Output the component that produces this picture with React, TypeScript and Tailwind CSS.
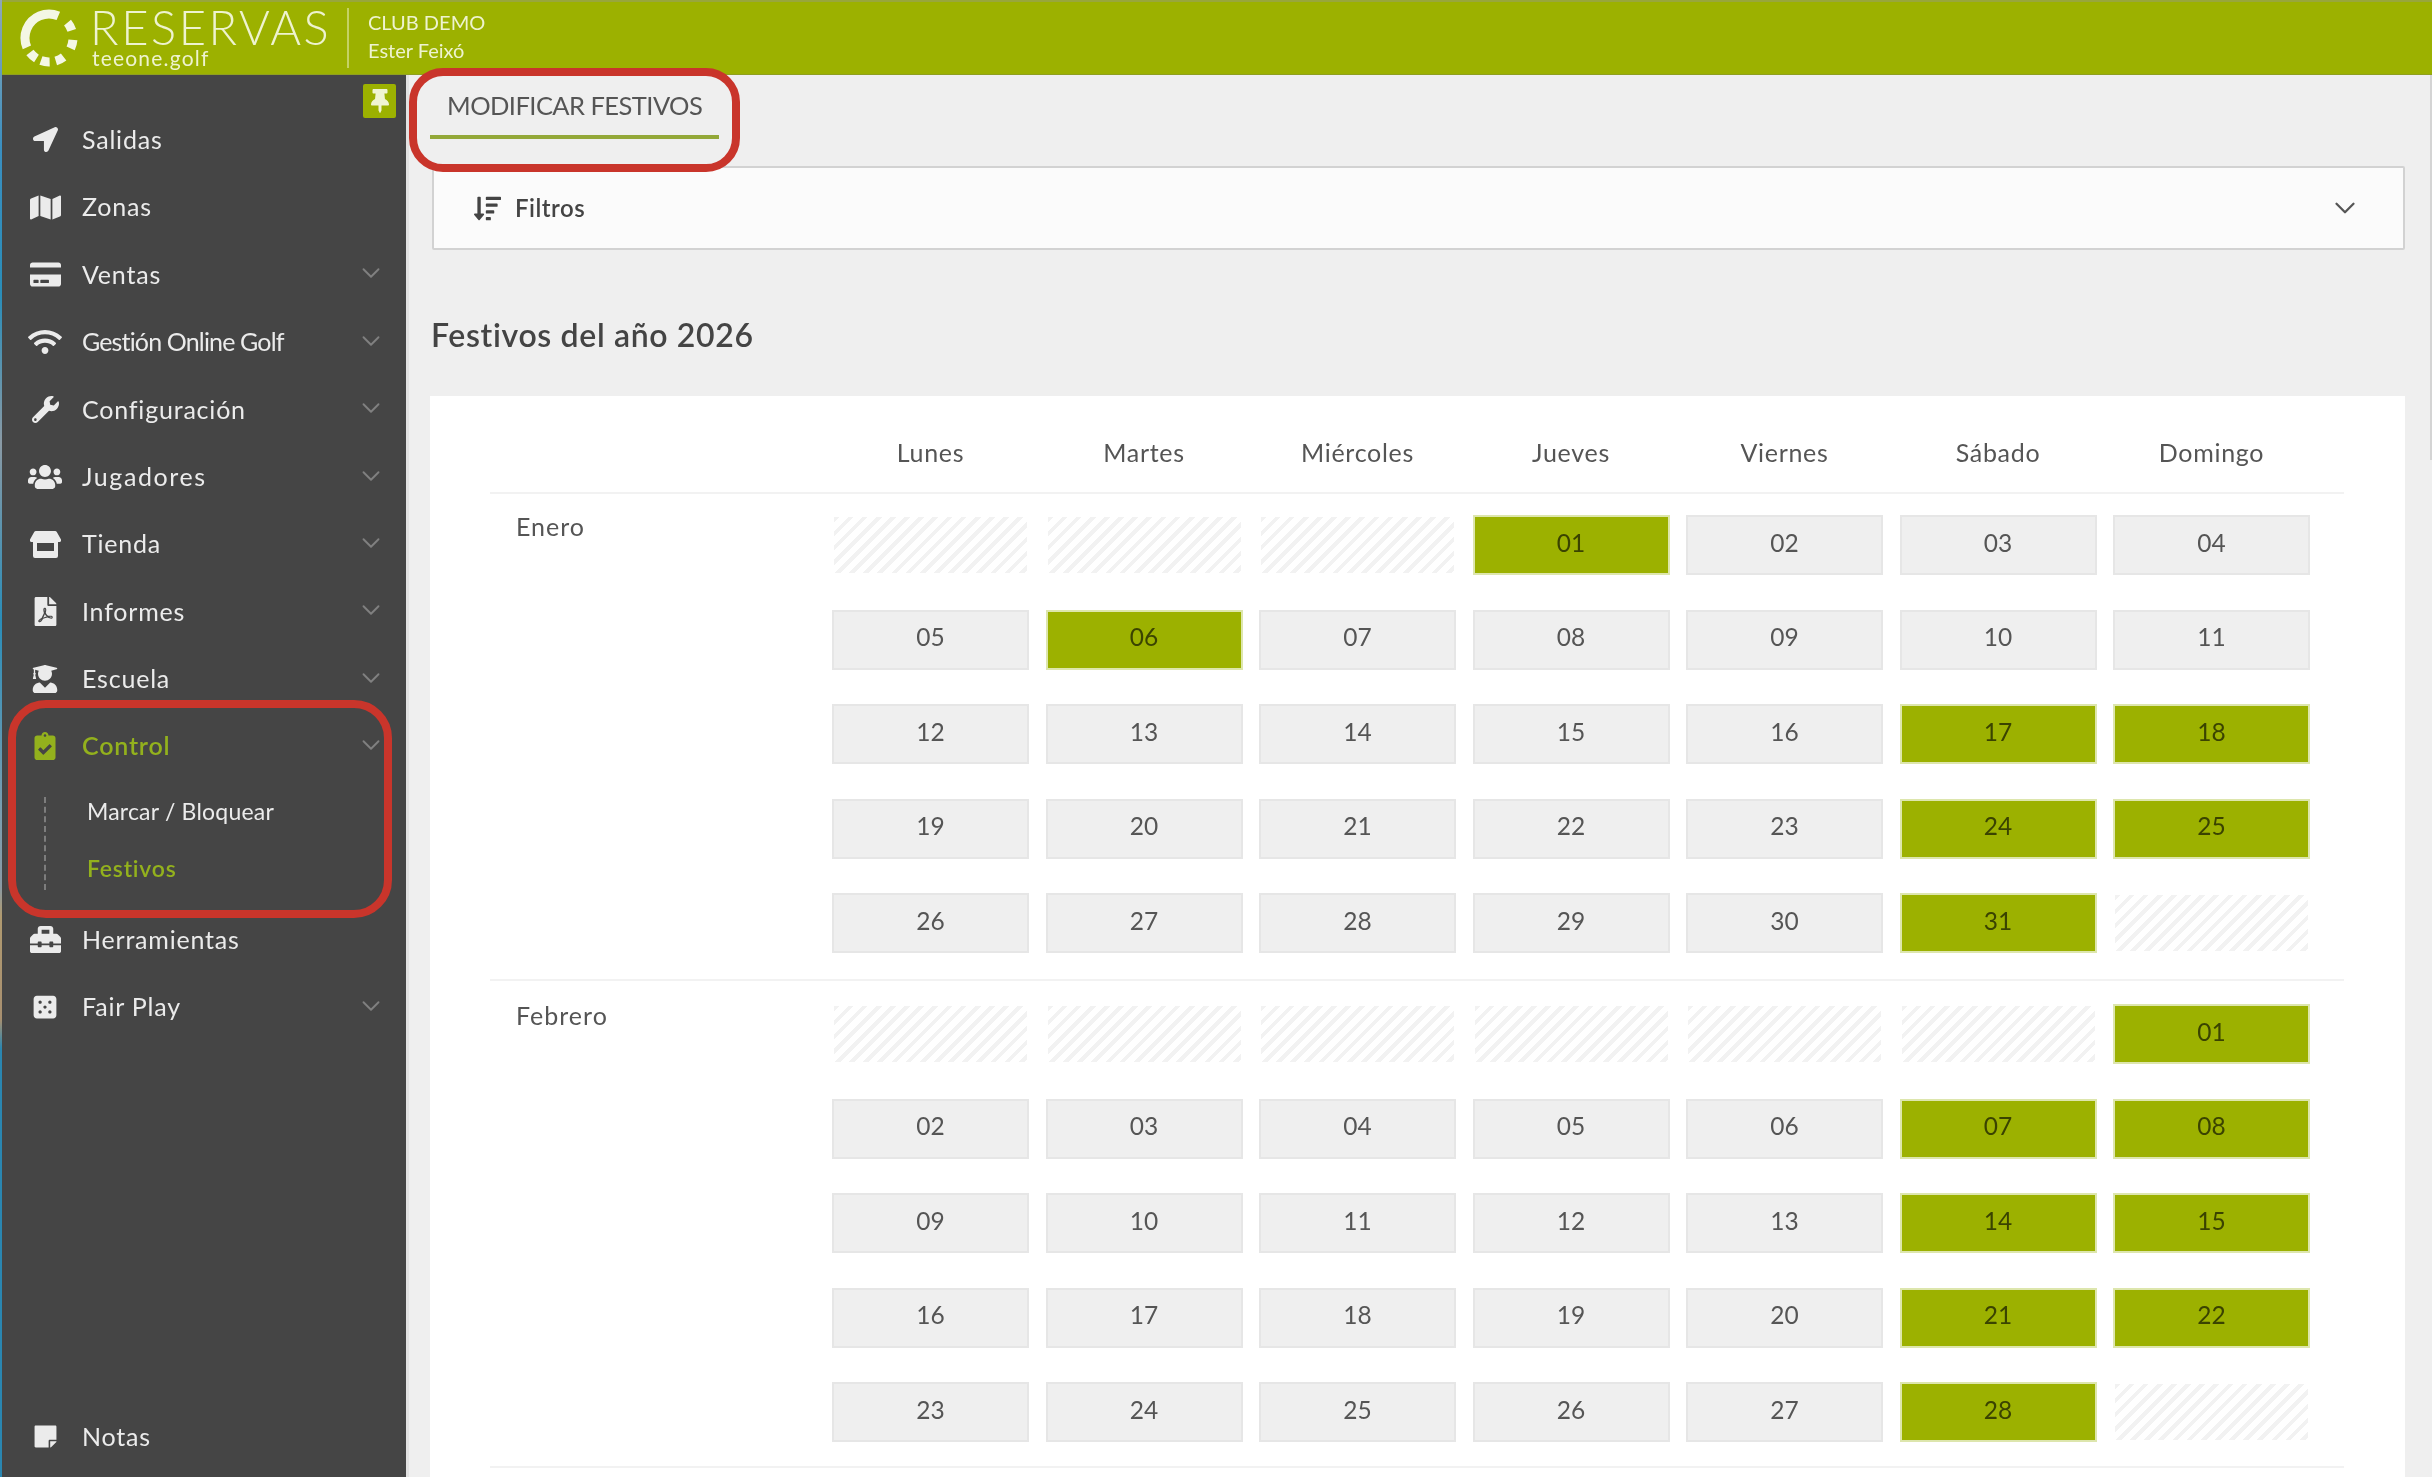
import React from "react";
import { ChevronDown } from "lucide-react";
import {
  FaLocationArrow, FaMap, FaCreditCard, FaWifi, FaWrench, FaUsers, FaFilePdf,
  FaUserGraduate, FaClipboardCheck, FaToolbox, FaDiceFive, FaStickyNote, FaThumbtack, FaSortAmountDown,
} from "react-icons/fa";

function StoreIcon() {
  return (
    <svg viewBox="0 0 31 27" className="h-[27px] w-[31px]" fill="currentColor">
      <path d="M6 0h19a2 2 0 0 1 1.8 1.1L31 8.5c.5 1.3-.4 2.5-1.7 2.5H1.7C.4 11-.5 9.8 0 8.5L4.2 1.100A2 2 0 0 1 6 0z" />
      <path fillRule="evenodd" d="M3 11h25v14a2 2 0 0 1-2 2H5a2 2 0 0 1-2-2V11zm4 1v8h17v-8H7z" />
    </svg>
  );
}

const menu = [
  { label: "Salidas", icon: FaLocationArrow, size: "text-[25px]" },
  { label: "Zonas", icon: FaMap, size: "text-[31px]" },
  { label: "Ventas", icon: FaCreditCard, more: true, size: "text-[31px]" },
  { label: "Gestión Online Golf", icon: FaWifi, more: true, size: "text-[34px]", track: "tracking-[-0.85px]" },
  { label: "Configuración", icon: FaWrench, more: true, size: "text-[27px]" },
  { label: "Jugadores", icon: FaUsers, more: true, size: "text-[34px]", track: "tracking-[1.6px]" },
  { label: "Tienda", icon: StoreIcon, more: true },
  { label: "Informes", icon: FaFilePdf, more: true, size: "text-[29px]" },
  { label: "Escuela", icon: FaUserGraduate, more: true, size: "text-[28px]" },
];

type RowProps = { label: string; icon: any; more?: boolean; active?: boolean; size?: string; track?: string };

function Row({ label, icon: Icon, more, active, size = "text-[25px]", track = "tracking-[0.8px]" }: RowProps) {
  return (
    <div className={`flex h-[67.4px] items-center pl-[25px] pr-[27px] ${active ? "text-[#93b11d] font-semibold" : "text-[#ebebeb]"}`}>
      <span className={`flex w-[36px] justify-center ${size}`}><Icon /></span>
      <span className={`ml-[19px] flex-1 text-[25px] ${track}`}>{label}</span>
      {more && <ChevronDown className="-mr-[7px] -mt-[2px] h-[30px] w-[30px] text-[#808080]" strokeWidth={1.5} />}
    </div>
  );
}

function Logo() {
  const dots = [132, 99, 63, 15, -29];
  const c = 2 * Math.PI * 24;
  return (
    <svg viewBox="0 0 64 64" className="h-[64px] w-[64px] shrink-0">
      <circle cx="32" cy="32" r="24" fill="none" stroke="#f4f7e4" strokeWidth="9"
        strokeDasharray={`${(c * 135) / 360} ${c}`} transform="rotate(157 32 32)" />
      {dots.map((a) => (
        <circle key={a} cx="32" cy="32" r="24" fill="none" stroke="#f4f7e4" strokeWidth="9"
          strokeDasharray={`${(c * 21) / 360} ${c}`} transform={`rotate(${a - 10.5} 32 32)`} />
      ))}
    </svg>
  );
}

const rows = (first: number, days: number, on: Record<number, boolean>) => {
  const cells: (number | null)[] = [];
  for (let i = 0; i < first; i++) cells.push(null);
  for (let d = 1; d <= days; d++) cells.push(d);
  while (cells.length < 35) cells.push(null);
  return { cells, on };
};

const months = [
  { name: "Enero", space: "pb-[26px] pt-[21px]", ...rows(3, 31, { 1: true, 6: true, 17: true, 18: true, 24: true, 25: true, 31: true }) },
  { name: "Febrero", space: "pb-[24px] pt-[23px]", ...rows(6, 28, { 1: true, 7: true, 8: true, 14: true, 15: true, 21: true, 22: true, 28: true }) },
];

function Cell({ day, on }: { day: number | null; on: boolean }) {
  if (day === null) {
    return <div className="h-[60px] border-2 border-white bg-[repeating-linear-gradient(135deg,#f2f2f2_0,#f2f2f2_4px,#ffffff_4px,#ffffff_10px)]" />;
  }
  const text = String(day).padStart(2, "0");
  return (
    <div className={`flex h-[60px] items-center justify-center border-2 pb-[4px] text-[24.5px] ${on ? "border-[#dde6ad] bg-[#9cb100] text-[#3a4300]" : "border-[#e6e6e6] bg-[#efefef] text-[#555555]"}`}>
      {text}
    </div>
  );
}

export default function App() {
  return (
    <div className="relative flex h-[1477px] w-[2432px] overflow-hidden bg-[#efefef] font-['Lato',sans-serif] text-[#444444] blur-[0.5px]">
      <div className="w-[2px] shrink-0 bg-[linear-gradient(180deg,#8fa7b5_0%,#3a8fc0_10%,#2a8db8_20%,#8a9aa5_30%,#2a8db8_42%,#7a9db0_55%,#8a9aa5_60%,#b09a70_62%,#a89070_69%,#2a86b0_71%,#2a86b0_100%)]" />
      <div className="flex min-w-0 flex-1 flex-col">
        <header className="flex h-[75px] shrink-0 items-center border-t-2 border-[#98a63c] border-b border-b-[#8f9f20] bg-[#9cb100] pl-[15px]">
          <Logo />
          <div className="ml-[9px] flex w-[257px] flex-col text-[#eef3cf]">
            <span className="h-[40px] text-[47px] font-light leading-[40px] tracking-[2.6px]">RESERVAS</span>
            <span className="h-[22px] pl-[2px] text-[21px] leading-[22px] tracking-[1.2px]">teeone.golf</span>
          </div>
          <div className="h-[60px] w-[2px] bg-[#c5d264]" />
          <div className="mb-[3px] ml-[19px] flex flex-col gap-[7px] text-[20px] leading-[21px] text-[#eef3cf]">
            <span>CLUB DEMO</span>
            <span>Ester Feixó</span>
          </div>
        </header>
        <div className="flex min-h-0 flex-1">
          <aside className="relative flex w-[404px] shrink-0 flex-col bg-[#454545] pb-[7px] pt-[31px]">
            <div className="absolute right-[10px] top-[9px] flex h-[34px] w-[33px] items-center justify-center rounded-[2px] bg-[#9cb100] text-[24px] text-[#f0f4d2]">
              <FaThumbtack />
            </div>
            {menu.map((m) => (
              <Row key={m.label} {...m} />
            ))}
            <Row label="Control" icon={FaClipboardCheck} more active size="text-[28px]" />
            <div className="mb-[16px] ml-[42px] mt-[17px] flex flex-col gap-[25px] border-l-2 border-dashed border-[#7d7d7d] pb-[4px] pl-[41px] text-[23px] tracking-[0.2px]">
              <span className="flex h-[32px] items-center pb-[3px] text-[#ebebeb]">Marcar / Bloquear</span>
              <span className="flex h-[32px] items-center pb-[3px] font-semibold tracking-[0.8px] text-[#93b11d]">Festivos</span>
            </div>
            <Row label="Herramientas" icon={FaToolbox} size="text-[31px]" />
            <Row label="Fair Play" icon={FaDiceFive} more size="text-[26px]" />
            <div className="mt-auto">
              <Row label="Notas" icon={FaStickyNote} size="text-[25px]" />
            </div>
          </aside>
          <main className="relative min-w-0 flex-1 border-l-[3px] border-[#e2e2e2] pl-[23px] pr-[27px]">
            <div className="absolute right-0 top-0 h-[385px] w-[2px] bg-[#d4d4d4]" />
            <div className="-ml-[2px] h-[64px] w-[289px] border-b-4 border-[#93a838] pl-[17px] pt-[15px] text-[25.5px] leading-[30px] tracking-[-0.55px] text-[#555555]">
              MODIFICAR FESTIVOS
            </div>
            <div className="mt-[27px] flex h-[84px] items-center justify-between rounded-[2px] border-2 border-[#d2d2d2] bg-[#fbfbfb] pl-[40px] pr-[41px]">
              <div className="flex items-center gap-[14px] text-[#444444]">
                <FaSortAmountDown className="text-[27px]" />
                <span className="text-[24px] font-semibold tracking-[0.5px]">Filtros</span>
              </div>
              <ChevronDown className="h-[34px] w-[34px] text-[#555555]" strokeWidth={1.6} />
            </div>
            <h1 className="mt-[65px] h-[40px] -ml-px text-[32px] font-semibold leading-[40px] tracking-[0.65px] text-[#444444]">Festivos del año 2026</h1>
            <section className="mt-[41px] -ml-[2px] h-[1200px] bg-white pl-[60px] pr-[61px]">
              <div className="flex h-[96px]">
                <div className="w-[342px] shrink-0" />
                <div className="grid flex-1 grid-cols-7 gap-x-[16.5px] pr-[34px] pt-[40px]">
                  {["Lunes", "Martes", "Miércoles", "Jueves", "Viernes", "Sábado", "Domingo"].map((d) => (
                    <span key={d} className="h-[32px] text-center text-[25px] leading-[32px] tracking-[0.7px] text-[#555555]">{d}</span>
                  ))}
                </div>
              </div>
              {months.map((m) => (
                <div key={m.name} className={`flex border-t-2 border-[#f2f2f2] ${m.space}`}>
                  <div className="w-[342px] shrink-0 pl-[26px] text-[25px] leading-[22px] tracking-[1px] text-[#555555]">{m.name}</div>
                  <div className="grid flex-1 grid-cols-7 gap-x-[16.5px] gap-y-[34.5px] pr-[34px]">
                    {m.cells.map((d, i) => (
                      <Cell key={i} day={d} on={d !== null && !!m.on[d]} />
                    ))}
                  </div>
                </div>
              ))}
              <div className="border-t-2 border-[#f2f2f2]" />
            </section>
          </main>
        </div>
      </div>
      <div className="absolute left-[409px] top-[68px] h-[104px] w-[331px] rounded-[34px] border-[8px] border-[#c9352b]" />
      <div className="absolute left-[8px] top-[700px] h-[218px] w-[384px] rounded-[38px] border-[8px] border-[#c9352b]" />
    </div>
  );
}
